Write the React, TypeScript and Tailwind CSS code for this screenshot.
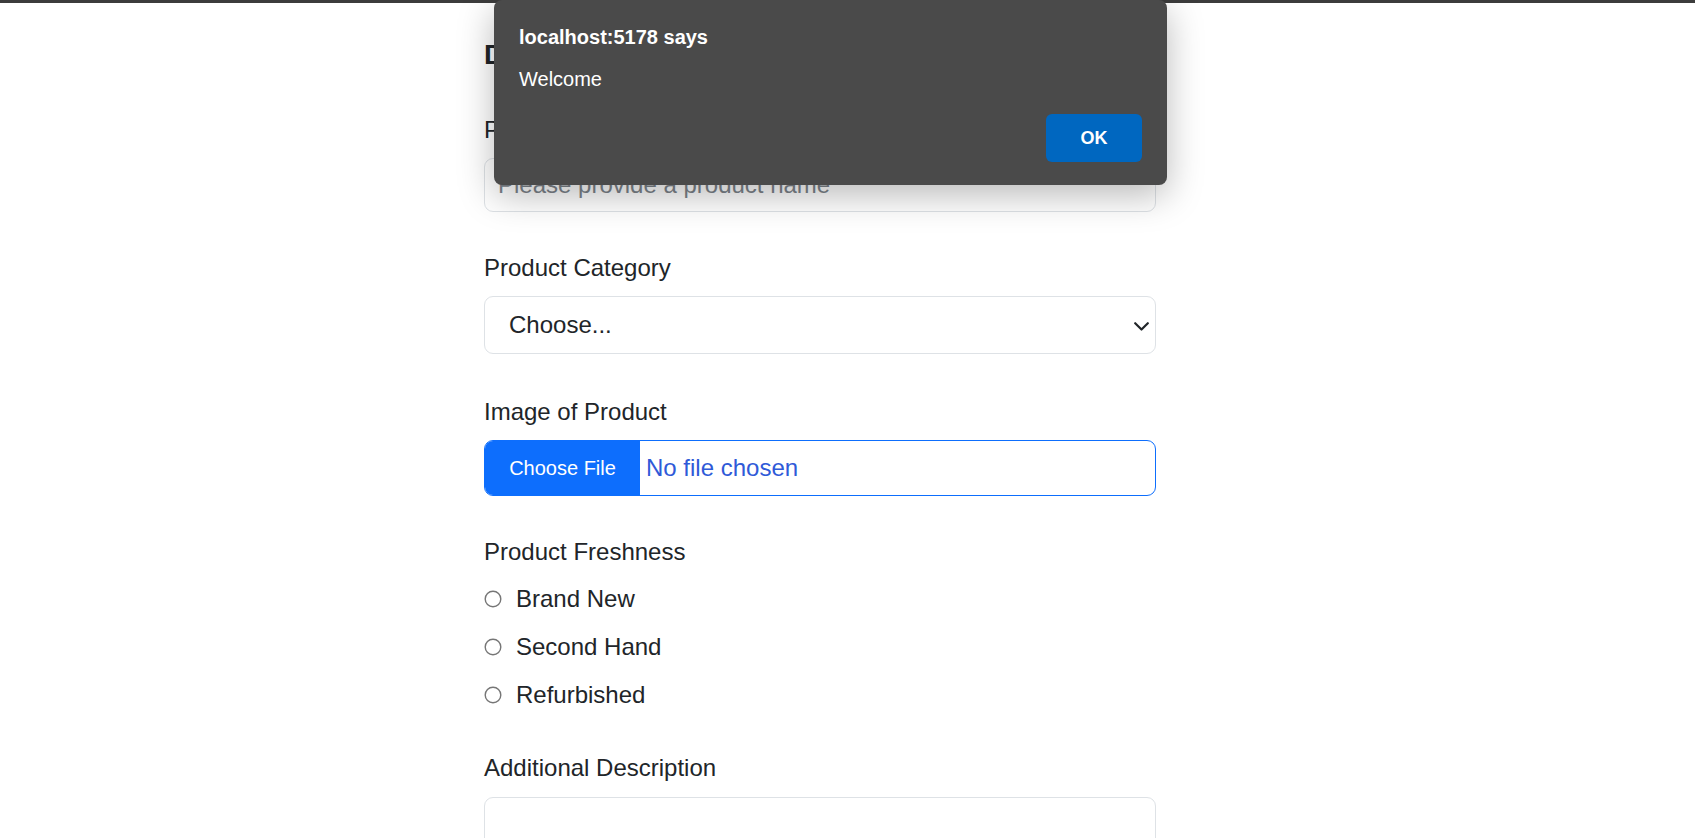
import React from "react";

function Radio({ label }: { label: string }) {
  return (
    <div className="flex items-center h-[36px]">
      <svg width="18" height="18" viewBox="0 0 18 18" className="shrink-0">
        <circle cx="9" cy="9" r="7.8" fill="white" stroke="#767676" strokeWidth="1.4" />
      </svg>
      <span className="ml-[14px] text-[24px] leading-[36px] text-[#212529]">{label}</span>
    </div>
  );
}

export default function App() {
  return (
    <div className="relative min-h-screen bg-white font-['Liberation_Sans',Arial,sans-serif] overflow-hidden">
      <div className="h-[3px] bg-[#3c3c3c]" />
      <div className="ml-[484px] w-[672px] flex flex-col">
        <h2 className="mt-[35px] text-[28px] leading-[34px] font-bold text-[#212529]">Detail Product</h2>

        <label className="mt-[40px] text-[24px] leading-[36px] text-[#212529]">Product Name</label>
        <div className="mt-[10px] h-[54px] border border-[#dee2e6] rounded-[9px] flex items-center pl-[13px]">
          <span className="text-[24px] text-[#7d848b]">Please provide a product name</span>
        </div>

        <label className="mt-[38px] text-[24px] leading-[36px] text-[#212529]">Product Category</label>
        <div className="relative mt-[10px] h-[58px] border border-[#dee2e6] rounded-[9px] flex items-center pl-[24px]">
          <span className="text-[24px] text-[#212529]">Choose...</span>
          <svg className="absolute right-[6px] top-[25px]" width="15" height="9" viewBox="0 0 15 9">
            <polyline points="1.2,1.2 7.5,7.5 13.8,1.2" fill="none" stroke="#212529" strokeWidth="2.2" strokeLinecap="round" strokeLinejoin="round" />
          </svg>
        </div>

        <label className="mt-[40px] text-[24px] leading-[36px] text-[#212529]">Image of Product</label>
        <div className="mt-[10px] h-[56px] border border-[#0d6efd] rounded-[9px] flex overflow-hidden">
          <div className="w-[155px] bg-[#0d6efd] flex items-center justify-center text-white text-[20px]">Choose File</div>
          <div className="flex items-center pl-[6px] text-[24px] text-[#2f5ad8]">No file chosen</div>
        </div>

        <label className="mt-[38px] text-[24px] leading-[36px] text-[#212529]">Product Freshness</label>
        <div className="mt-[11px] flex flex-col gap-[12px]">
          <Radio label="Brand New" />
          <Radio label="Second Hand" />
          <Radio label="Refurbished" />
        </div>

        <label className="mt-[37px] text-[24px] leading-[36px] text-[#212529]">Additional Description</label>
        <div className="mt-[11px] h-[160px] border border-[#dee2e6] rounded-[9px]" />
      </div>

      <div className="absolute top-0 left-[494px] w-[673px] h-[185px] bg-[#4a4a4a] rounded-[8px] shadow-[0_10px_36px_rgba(0,0,0,0.28)] px-[25px] pt-[23px] flex flex-col">
        <div className="text-white text-[20px] leading-[28px] font-bold">localhost:5178 says</div>
        <div className="mt-[14px] text-white text-[20px] leading-[28px]">Welcome</div>
        <div className="mt-[21px] flex justify-end pr-[-1px]">
          <button className="w-[96px] h-[48px] bg-[#0067c0] rounded-[6px] text-white text-[18px] font-bold">OK</button>
        </div>
      </div>
    </div>
  );
}
